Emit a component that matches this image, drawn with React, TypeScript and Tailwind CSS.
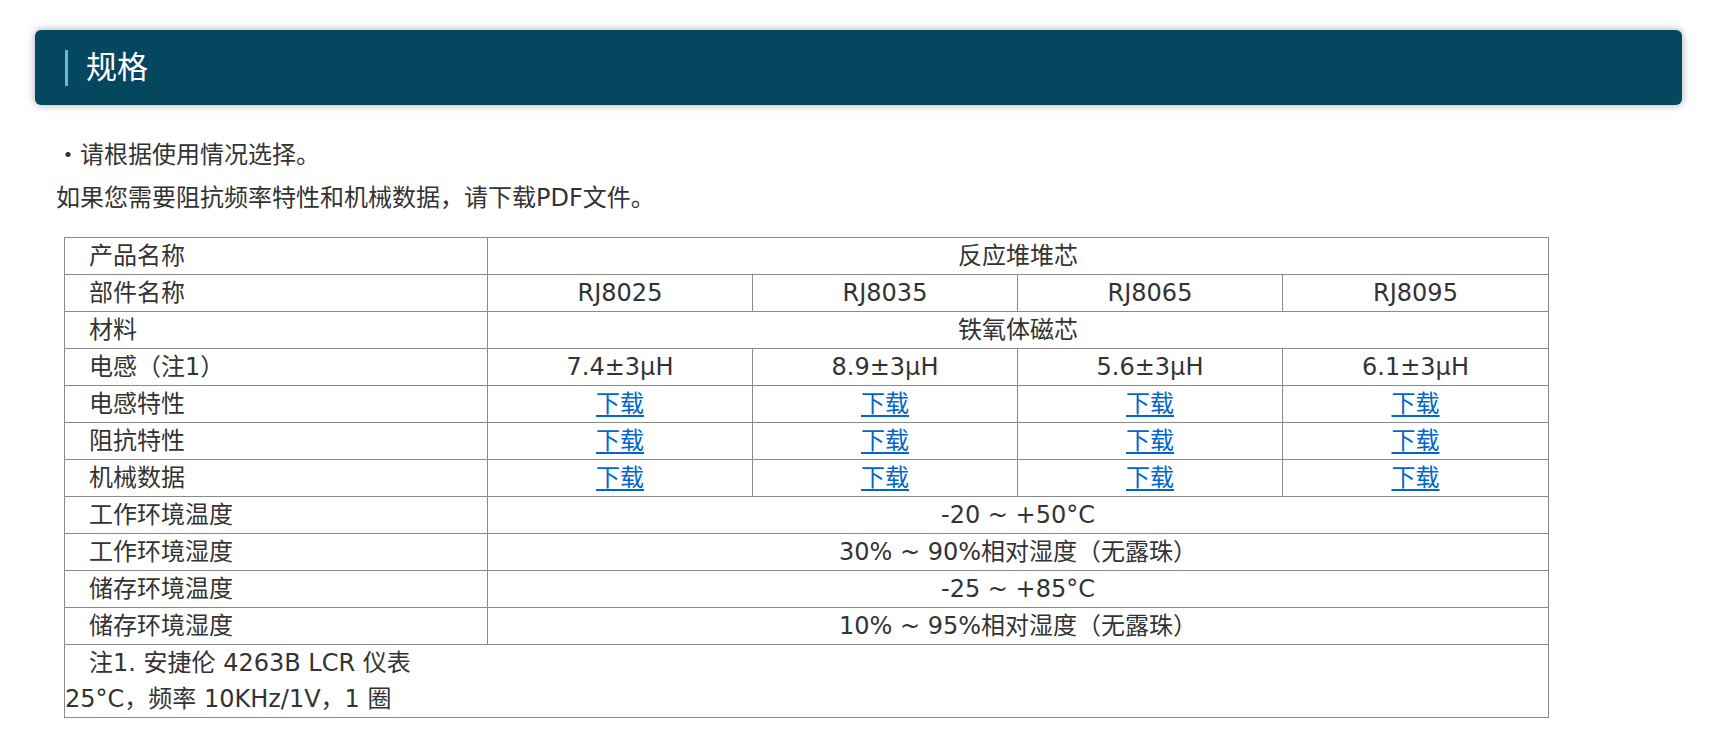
const labelCell = 'border border-[#8a8a8a] text-left';
const valueCell = 'border border-[#8a8a8a] text-center';

const parts = ['RJ8025', 'RJ8035', 'RJ8065', 'RJ8095'];
const inductance = ['7.4±3μH', '8.9±3μH', '5.6±3μH', '6.1±3μH'];

const DownloadRow = ({ label }: { label: string }) => (
  <tr>
    <td className={labelCell}>{'\u3000' + label}</td>
    {parts.map((p) => (
      <td key={p} className={valueCell}>
        <a href="#" className="text-[#0066cc] underline underline-offset-[3px]">
          下载
        </a>
      </td>
    ))}
  </tr>
);

const SpanRow = ({ label, value }: { label: string; value: string }) => (
  <tr>
    <td className={labelCell}>{'\u3000' + label}</td>
    <td colSpan={4} className={valueCell}>
      {value}
    </td>
  </tr>
);

export default function App() {
  return (
    <div className="min-h-screen bg-white pt-[30px] pl-[35px] pr-[32px] pb-[20px] text-[#333] font-['DejaVu_Sans','Noto_Sans_CJK_SC',sans-serif]">
      <div className="flex h-[75px] items-center rounded-[6px] bg-[#05475f] pl-[30px] shadow-[0_0_8px_rgba(0,0,0,0.35)]">
        <span className="h-[36px] w-[3px] bg-[#6cb6da]" />
        <h2 className="ml-[18px] text-[31px] leading-none text-white">规格</h2>
      </div>

      <div className="pt-[29px] pl-[21px] text-[24px] leading-[1.8]">
        <p>・请根据使用情况选择。</p>
        <p>如果您需要阻抗频率特性和机械数据，请下载PDF文件。</p>

        <table className="mt-[17px] ml-[8px] w-[1484px] table-fixed border-collapse border border-[#8a8a8a] leading-[36px]">
          <colgroup>
            <col className="w-[423px]" />
            <col className="w-[265px]" />
            <col className="w-[265px]" />
            <col className="w-[265px]" />
            <col className="w-[266px]" />
          </colgroup>
          <tbody>
            <SpanRow label="产品名称" value="反应堆堆芯" />
            <tr>
              <td className={labelCell}>{'\u3000部件名称'}</td>
              {parts.map((p) => (
                <td key={p} className={valueCell}>
                  {p}
                </td>
              ))}
            </tr>
            <SpanRow label="材料" value="铁氧体磁芯" />
            <tr>
              <td className={labelCell}>{'\u3000电感（注1）'}</td>
              {inductance.map((v) => (
                <td key={v} className={valueCell}>
                  {v}
                </td>
              ))}
            </tr>
            <DownloadRow label="电感特性" />
            <DownloadRow label="阻抗特性" />
            <DownloadRow label="机械数据" />
            <SpanRow label="工作环境温度" value="-20 ~ +50°C" />
            <SpanRow label="工作环境湿度" value="30% ~ 90%相对湿度（无露珠）" />
            <SpanRow label="储存环境温度" value="-25 ~ +85°C" />
            <SpanRow label="储存环境湿度" value="10% ~ 95%相对湿度（无露珠）" />
            <tr>
              <td colSpan={5} className={labelCell}>
                {'\u3000注1. 安捷伦 4263B LCR 仪表'}
                <br />
                {'25°C，频率 10KHz/1V，1 圈'}
              </td>
            </tr>
          </tbody>
        </table>
      </div>
    </div>
  );
}
